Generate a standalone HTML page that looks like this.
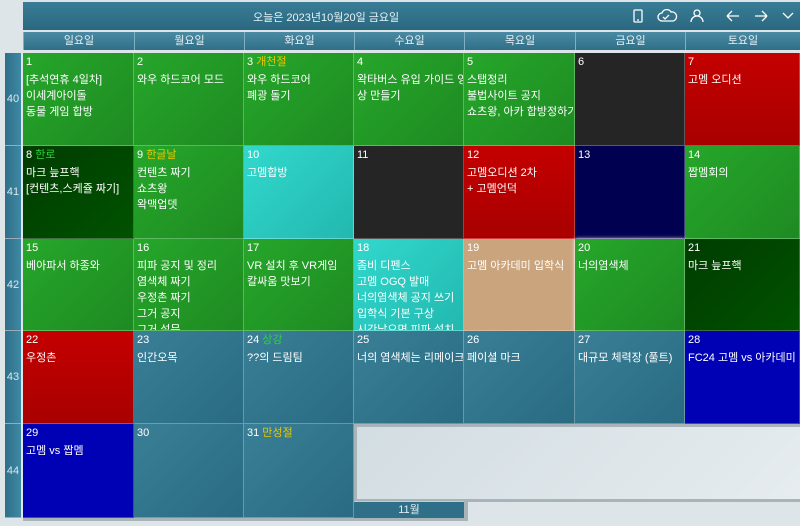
<!DOCTYPE html>
<html><head><meta charset="utf-8"><style>
*{margin:0;padding:0;box-sizing:border-box}
body{width:800px;height:526px;overflow:hidden;background:#dde5e9;font-family:"Liberation Sans","Noto Sans CJK KR",sans-serif;font-size:11px;color:#fff;position:relative}
.a{position:absolute}
.top{left:23px;top:2px;width:777px;height:28px;background:linear-gradient(#3a7d96,#2a6880);}
.top .t{position:absolute;left:230px;top:7px;font-size:11px;color:#e8f2f6}
.hd{top:32px;height:18px;background:linear-gradient(#4a8aa2,#2f6f88);border-left:1px solid #7fb0c2;text-align:center;line-height:18px;color:#e8f0f4;font-size:11px}
.wk{left:5px;width:16px;background:linear-gradient(90deg,#2f6f88,#3f89a4);color:#d8e8ee;text-align:center;font-size:11px;border-bottom:1px solid #9ab}
.c{width:110px;height:93px;padding:1px 0 0 3px;line-height:16px;border-right:1px solid rgba(255,255,255,.25);border-bottom:1px solid rgba(255,255,255,.25);overflow:hidden;white-space:nowrap}
.c .n{height:18px}
.g{background:linear-gradient(135deg,#26a72a,#1e8a22)}
.tl{background:linear-gradient(135deg,#3a7f96,#286b82)}
.k{background:#252525}.r{background:linear-gradient(#c40000,#a80000)}
.nv{background:#000050}.cy{background:linear-gradient(135deg,#32d8cc,#22b8b0)}
.dg{background:linear-gradient(135deg,#003c00,#005200)}.tan{background:#c9a47c}
.bl{background:#0000b4}
.y{color:#e8c800}.gr{color:#2ed33a}
</style></head><body>
<div class="a top"><span class="t">오늘은 2023년10월20일 금요일</span>
<svg class="a" style="left:604px;top:5px" width="170" height="18" viewBox="0 0 170 18" fill="none" stroke="#fff" stroke-width="1.3">
<rect x="7" y="3" width="8" height="12" rx="1"/><line x1="10" y1="13" x2="12" y2="13"/>
<path d="M40 14h-5a4 4 0 0 1 0-8 5 5 0 0 1 9-1 4 4 0 0 1 2 9z"/><path d="M36 10l2 2 4-4"/>
<circle cx="70" cy="6" r="3"/><path d="M64 15a6 6 0 0 1 12 0"/>
<path d="M100 9h12M100 9l5-5M100 9l5 5"/>
<path d="M128 9h12M140 9l-5-5M140 9l-5 5"/>
<path d="M156 6l5 5 5-5"/>
</svg></div>
<div class="a hd" style="left:23px;width:111px">일요일</div>
<div class="a hd" style="left:134px;width:110px">월요일</div>
<div class="a hd" style="left:244px;width:110px">화요일</div>
<div class="a hd" style="left:354px;width:110px">수요일</div>
<div class="a hd" style="left:464px;width:111px">목요일</div>
<div class="a hd" style="left:575px;width:110px">금요일</div>
<div class="a hd" style="left:685px;width:115px">토요일</div>

<div class="a wk" style="top:53px;height:93px;line-height:93px">40</div>
<div class="a wk" style="top:146px;height:93px;line-height:93px">41</div>
<div class="a wk" style="top:239px;height:92px;line-height:92px">42</div>
<div class="a wk" style="top:331px;height:93px;line-height:93px">43</div>
<div class="a wk" style="top:424px;height:94px;line-height:94px">44</div>

<div class="a c g" style="left:23px;top:53px;width:111px"><div class="n">1</div>[추석연휴 4일차]<br>이세계아이돌<br>동물 게임 합방</div>
<div class="a c g" style="left:134px;top:53px"><div class="n">2</div>와우 하드코어 모드</div>
<div class="a c g" style="left:244px;top:53px"><div class="n">3 <span class="y">개천절</span></div>와우 하드코어<br>폐광 돌기</div>
<div class="a c g" style="left:354px;top:53px"><div class="n">4</div>왁타버스 유입 가이드 영<br>상 만들기</div>
<div class="a c g" style="left:464px;top:53px;width:111px"><div class="n">5</div>스탭정리<br>불법사이트 공지<br>쇼츠왕, 아카 합방정하기</div>
<div class="a c k" style="left:575px;top:53px"><div class="n">6</div></div>
<div class="a c r" style="left:685px;top:53px;width:115px"><div class="n">7</div>고멤 오디션</div>

<div class="a c dg" style="left:23px;top:146px;width:111px"><div class="n">8 <span class="gr">한로</span></div>마크 늪프핵<br>[컨텐츠,스케쥴 짜기]</div>
<div class="a c g" style="left:134px;top:146px"><div class="n">9 <span class="y">한글날</span></div>컨텐츠 짜기<br>쇼츠왕<br>왁맥업뎃</div>
<div class="a c cy" style="left:244px;top:146px"><div class="n">10</div>고멤합방</div>
<div class="a c k" style="left:354px;top:146px"><div class="n">11</div></div>
<div class="a c r" style="left:464px;top:146px;width:111px"><div class="n">12</div>고멤오디션 2차<br>+ 고멤언덕</div>
<div class="a c nv" style="left:575px;top:146px"><div class="n">13</div></div>
<div class="a c g" style="left:685px;top:146px;width:115px"><div class="n">14</div>짭멤회의</div>

<div class="a c g" style="left:23px;top:239px;width:111px;height:92px"><div class="n">15</div>베아파서 하종와</div>
<div class="a c g" style="left:134px;top:239px;height:92px"><div class="n">16</div>피파 공지 및 정리<br>염색체 짜기<br>우정촌 짜기<br>그거 공지<br>그거 설문</div>
<div class="a c g" style="left:244px;top:239px;height:92px"><div class="n">17</div>VR 설치 후 VR게임<br>칼싸움 맛보기</div>
<div class="a c cy" style="left:354px;top:239px;height:92px"><div class="n">18</div>좀비 디펜스<br>고멤 OGQ 발매<br>너의염색체 공지 쓰기<br>입학식 기본 구상<br>시간남으면 피파 설치</div>
<div class="a c tan" style="left:464px;top:239px;width:111px;height:92px"><div class="n">19</div>고멤 아카데미 입학식</div>
<div class="a c g" style="left:575px;top:239px;height:92px;box-shadow:0 0 4px #fff"><div class="n">20</div>너의염색체</div>
<div class="a c dg" style="left:685px;top:239px;width:115px;height:92px"><div class="n">21</div>마크 늪프핵</div>

<div class="a c r" style="left:23px;top:331px;width:111px"><div class="n">22</div>우정촌</div>
<div class="a c tl" style="left:134px;top:331px"><div class="n">23</div>인간오목</div>
<div class="a c tl" style="left:244px;top:331px"><div class="n">24 <span class="gr">상강</span></div>??의 드림팀</div>
<div class="a c tl" style="left:354px;top:331px"><div class="n">25</div>너의 염색체는 리메이크</div>
<div class="a c tl" style="left:464px;top:331px;width:111px"><div class="n">26</div>페이셜 마크</div>
<div class="a c tl" style="left:575px;top:331px"><div class="n">27</div>대규모 체력장 (풀트)</div>
<div class="a c bl" style="left:685px;top:331px;width:115px"><div class="n">28</div>FC24 고멤 vs 아카데미</div>

<div class="a c bl" style="left:23px;top:424px;width:111px;height:94px"><div class="n">29</div>고멤 vs 짭멤</div>
<div class="a c tl" style="left:134px;top:424px;height:94px"><div class="n">30</div></div>
<div class="a c tl" style="left:244px;top:424px;height:94px"><div class="n">31 <span class="y">만성절</span></div></div>
<div class="a" style="left:354px;top:424px;width:446px;height:78px;background:#a9b4b8"></div>
<div class="a" style="left:357px;top:427px;width:443px;height:72px;background:linear-gradient(135deg,#d2dde2,#e6ecef)"></div>
<div class="a" style="left:354px;top:501px;width:110px;height:17px;background:#2f7088;border-top:1px solid #bcd;text-align:center;line-height:16px;color:#e0eef2">11월</div>
<div class="a" style="left:464px;top:502px;width:4px;height:18px;background:#a9b4b8"></div>
<div class="a" style="left:23px;top:518px;width:445px;height:3px;background:#a9b4b8"></div>
</body></html>
